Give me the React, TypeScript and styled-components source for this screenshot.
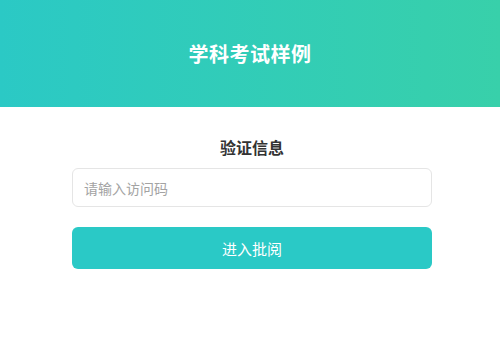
import styled, { createGlobalStyle } from 'styled-components';

const GlobalStyle = createGlobalStyle`
  * {
    box-sizing: border-box;
  }
  body {
    margin: 0;
    background: #ffffff;
    font-family: 'Noto Sans CJK SC', 'Liberation Sans', sans-serif;
  }
`;

const Page = styled.div`
  display: flex;
  flex-direction: column;
  width: 100%;
  min-height: 359px;
`;

const Header = styled.header`
  display: flex;
  align-items: center;
  justify-content: center;
  height: 107px;
  background: linear-gradient(90deg, #2bc9c5 0%, #38d0aa 100%);
`;

const Title = styled.h1`
  margin: 0;
  font-size: 20px;
  font-weight: 700;
  color: #ffffff;
  letter-spacing: 0.5px;
`;

const Body = styled.main`
  display: flex;
  justify-content: center;
  padding-left: 4px;
`;

const Form = styled.div`
  display: flex;
  flex-direction: column;
  align-items: stretch;
  width: 360px;
  padding-top: 29px;
`;

const FormTitle = styled.h2`
  margin: 0 0 10px;
  font-size: 16px;
  line-height: 22px;
  font-weight: 700;
  color: #333333;
  text-align: center;
`;

const Input = styled.input`
  height: 39px;
  padding: 0 11px;
  border: 1px solid #e5e5e5;
  border-radius: 6px;
  font-family: inherit;
  font-size: 14px;
  color: #333333;
  outline: none;
  &::placeholder {
    color: #a3a3a3;
  }
`;

const Button = styled.button`
  height: 42px;
  margin-top: 20px;
  border: none;
  border-radius: 6px;
  background: #2ac9c6;
  color: #ffffff;
  font-family: inherit;
  font-size: 15px;
  cursor: pointer;
`;

export default function App() {
  return (
    <Page>
      <GlobalStyle />
      <Header>
        <Title>学科考试样例</Title>
      </Header>
      <Body>
        <Form>
          <FormTitle>验证信息</FormTitle>
          <Input placeholder="请输入访问码" />
          <Button>进入批阅</Button>
        </Form>
      </Body>
    </Page>
  );
}
